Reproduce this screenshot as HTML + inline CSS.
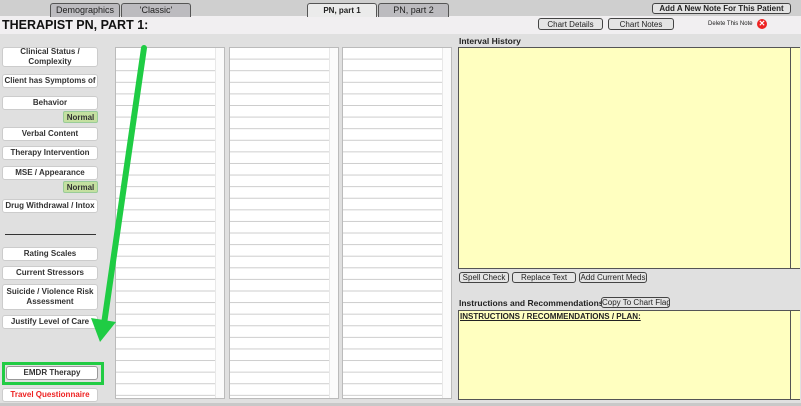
<!DOCTYPE html>
<html><head><style>
*{margin:0;padding:0;box-sizing:border-box}
body{width:801px;height:406px;background:#e0e0e0;font-family:"Liberation Sans",Arial,sans-serif;position:relative;overflow:hidden}
.a{position:absolute;white-space:nowrap}
.tab{position:absolute;top:3px;height:14px;border:1px solid #555;border-bottom:none;border-radius:3px 3px 0 0;background:#bcbbbf;font-size:9px;text-align:center;line-height:13px;color:#222;white-space:nowrap}
.btn{position:absolute;background:#fff;border:1px solid #ccc;border-radius:3px;font-size:8px;font-weight:bold;color:#333;text-align:center;display:flex;align-items:center;justify-content:center;line-height:10px;white-space:nowrap}
.gb{position:absolute;background:#e4e4e4;border:1px solid #444;border-radius:3px;font-size:8px;text-align:center;line-height:10px;color:#222;white-space:nowrap;overflow:hidden}
.norm{position:absolute;left:63px;width:35px;height:12px;background:#c4e0a0;border:1px solid #9c9;border-radius:2px;font-size:8px;font-weight:bold;text-align:center;line-height:11px;color:#333}
.list{position:absolute;top:47px;height:352px;background:#fff;border:1px solid #bbb;
background-image:linear-gradient(to bottom,transparent 10.5px,#ccc 10.5px,#ccc 11.6px);background-size:calc(100% - 9px) 11.6px;background-repeat:repeat-y}
.list:after{content:"";position:absolute;right:0;top:0;width:8px;height:100%;background:#fbfbfb;border-left:1px solid #e8e8e8}
.ta{position:absolute;left:458px;width:342px;background:#ffffc0;border:1px solid #555;border-right:none}
.ta:after{content:"";position:absolute;right:0;top:0;width:9px;height:100%;border-left:1px solid #555;background:#ffffc0}
.lbl{position:absolute;left:459px;font-size:8.5px;font-weight:bold;color:#222;white-space:nowrap}
</style></head><body>
<div class="a" style="left:0;top:0;width:801px;height:16px;background:#cfcfcf"></div>
<div class="a" style="left:0;top:16px;width:801px;height:18px;background:#f1eff1"></div>
<div class="tab" style="left:50px;width:70px">Demographics</div>
<div class="tab" style="left:121px;width:70px">'Classic'</div>
<div class="tab" style="left:307px;width:70px;background:#ebebeb;font-weight:bold;font-size:8px">PN, part 1</div>
<div class="tab" style="left:378px;width:71px">PN, part 2</div>
<div class="gb" style="left:652px;top:3px;width:139px;height:11px;font-weight:bold">Add A New Note For This Patient</div>
<div class="a" style="left:2px;top:18px;font-size:12.5px;font-weight:bold;color:#111">THERAPIST PN, PART 1:</div>
<div class="gb" style="left:538px;top:18px;width:65px;height:12px;line-height:11px">Chart Details</div>
<div class="gb" style="left:608px;top:18px;width:66px;height:12px;line-height:11px">Chart Notes</div>
<div class="a" style="left:708px;top:21px;font-size:6px;color:#222">Delete This Note</div>
<div class="a" style="left:757px;top:19px;width:10px;height:10px;border-radius:50%;background:#e22;color:#fff;font-size:8px;font-weight:bold;text-align:center;line-height:10px">✕</div>

<div class="btn" style="left:2px;top:47px;width:96px;height:20px">Clinical Status /<br>Complexity</div>
<div class="btn" style="left:2px;top:74px;width:96px;height:14px">Client has Symptoms of</div>
<div class="btn" style="left:2px;top:96px;width:96px;height:14px">Behavior</div>
<div class="norm" style="top:111px">Normal</div>
<div class="btn" style="left:2px;top:127px;width:96px;height:14px">Verbal Content</div>
<div class="btn" style="left:2px;top:146px;width:96px;height:14px">Therapy Intervention</div>
<div class="btn" style="left:2px;top:166px;width:96px;height:14px">MSE / Appearance</div>
<div class="norm" style="top:181px">Normal</div>
<div class="btn" style="left:2px;top:199px;width:96px;height:14px">Drug Withdrawal / Intox</div>
<div class="a" style="left:5px;top:234px;width:91px;height:1px;background:#333"></div>
<div class="btn" style="left:2px;top:247px;width:96px;height:14px">Rating Scales</div>
<div class="btn" style="left:2px;top:266px;width:96px;height:14px">Current Stressors</div>
<div class="btn" style="left:2px;top:284px;width:96px;height:26px">Suicide / Violence Risk<br>Assessment</div>
<div class="btn" style="left:2px;top:315px;width:96px;height:14px">Justify Level of Care</div>
<div class="a" style="left:2px;top:362px;width:102px;height:23px;border:3px solid #22cc44"></div>
<div class="btn" style="left:6px;top:366px;width:92px;height:14px;border-color:#999">EMDR Therapy</div>
<div class="btn" style="left:2px;top:388px;width:96px;height:14px;color:#e22">Travel Questionnaire</div>

<div class="list" style="left:115px;width:110px"></div>
<div class="list" style="left:229px;width:110px"></div>
<div class="list" style="left:342px;width:110px"></div>

<div class="lbl" style="top:36px">Interval History</div>
<div class="ta" style="top:47px;height:222px"></div>
<div class="gb" style="left:459px;top:272px;width:50px;height:11px">Spell Check</div>
<div class="gb" style="left:512px;top:272px;width:64px;height:11px">Replace Text</div>
<div class="gb" style="left:579px;top:272px;width:68px;height:11px">Add Current Meds</div>
<div class="lbl" style="top:298px">Instructions and Recommendations</div>
<div class="gb" style="left:601px;top:297px;width:69px;height:11px">Copy To Chart Flag</div>
<div class="ta" style="top:310px;height:90px"><div style="font-size:8px;font-weight:bold;text-decoration:underline;color:#222;margin:1px 0 0 1px">INSTRUCTIONS / RECOMMENDATIONS / PLAN:</div></div>
<div class="a" style="left:0;top:403px;width:801px;height:3px;background:#c8c8c8"></div>

<svg class="a" style="left:0;top:0" width="801" height="406">
<line x1="144" y1="48" x2="104" y2="324" stroke="#1fcc44" stroke-width="6" stroke-linecap="round"/>
<polygon points="91,318 116,322 100,342" fill="#1fcc44"/>
</svg>
</body></html>
